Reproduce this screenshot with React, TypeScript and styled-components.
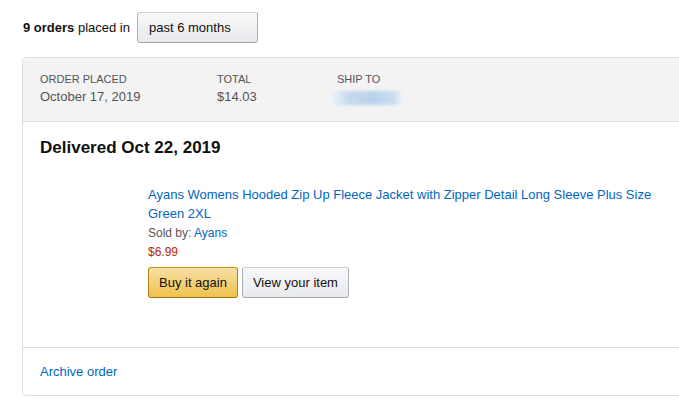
import React from 'react';
import styled, { createGlobalStyle } from 'styled-components';

const GlobalStyle = createGlobalStyle`
  html, body {
    margin: 0;
    padding: 0;
    background: #fff;
  }
  body {
    font-family: "Liberation Sans", Arial, sans-serif;
    font-size: 13px;
    color: #111;
  }
`;

const Page = styled.div`
  box-sizing: border-box;
  width: 100%;
  overflow: hidden;
  padding: 12px 0 12px 22px;
`;

const FilterRow = styled.div`
  display: flex;
  align-items: center;
  height: 31px;
  padding-left: 1px;
`;

const FilterText = styled.span`
  font-size: 13px;
  color: #111;
  margin-right: 7px;
  b {
    font-weight: bold;
  }
`;

const Dropdown = styled.button`
  width: 121px;
  height: 31px;
  padding: 0 11px;
  text-align: left;
  font-family: inherit;
  font-size: 13px;
  color: #111;
  border: 1px solid #adb1b8;
  border-color: #cdcdcd #adb1b8 #a2a6ac;
  border-radius: 3px;
  background: linear-gradient(to bottom, #f7f8fa, #e7e9ec);
  box-shadow: 0 1px 0 rgba(255, 255, 255, 0.6) inset;
`;

const Card = styled.div`
  margin-top: 14px;
  margin-right: -10px;
  border: 1px solid #ddd;
  border-radius: 4px;
  overflow: hidden;
`;

const CardHeader = styled.div`
  display: flex;
  background: #f3f3f3;
  border-bottom: 1px solid #ddd;
  padding: 14px 17px 14px;
  height: 35px;
`;

const HeaderCol = styled.div<{ $w: number }>`
  width: ${p => p.$w}px;
  display: flex;
  flex-direction: column;
`;

const Label = styled.div`
  font-size: 11px;
  line-height: 15px;
  text-transform: uppercase;
  color: #555;
`;

const Value = styled.div`
  font-size: 13px;
  line-height: 20px;
  color: #555;
`;

const Blurred = styled.div`
  margin-top: 4px;
  margin-left: -7px;
  width: 74px;
  height: 14px;
  background: linear-gradient(to right, #f1f5fa, #c6d9ee 25%, #b9d2ec 60%, #c9dcef 85%, #f2f6fa);
  filter: blur(1.5px);
`;

const ItemSection = styled.div`
  padding: 16px 17px 0;
  height: 209px;
  border-bottom: 1px solid #ddd;
`;

const Status = styled.div`
  font-size: 17px;
  font-weight: bold;
  line-height: 20px;
  color: #111;
`;

const ItemRow = styled.div`
  display: flex;
  margin-top: 27px;
`;

const Thumb = styled.div`
  width: 90px;
  height: 90px;
  margin-right: 18px;
`;

const ItemInfo = styled.div`
  width: 520px;
  display: flex;
  flex-direction: column;
`;

const Link = styled.a`
  color: #0066c0;
  text-decoration: none;
  cursor: pointer;
`;

const Title = styled(Link)`
  font-size: 13px;
  line-height: 19px;
  margin-bottom: 1px;
`;

const Small = styled.div<{ $color?: string }>`
  font-size: 12px;
  line-height: 19px;
  color: ${p => p.$color || '#555'};
`;

const Buttons = styled.div`
  display: flex;
  gap: 4px;
  margin-top: 5px;
`;

const Button = styled.button<{ $primary?: boolean }>`
  height: 31px;
  padding: 0 10px;
  font-family: inherit;
  font-size: 13px;
  color: #111;
  border: 1px solid;
  border-radius: 3px;
  border-color: ${p => (p.$primary ? '#c89411 #b0820f #99710d' : '#cdcdcd #adb1b8 #a2a6ac')};
  background: ${p =>
    p.$primary
      ? 'linear-gradient(to bottom, #f7dfa5, #f0c14b)'
      : 'linear-gradient(to bottom, #f7f8fa, #e7e9ec)'};
`;

const Footer = styled.div`
  padding: 16px 17px;
  height: 15px;
  line-height: 15px;
  font-size: 13px;
`;

export default function App() {
  return (
    <>
      <GlobalStyle />
      <Page>
        <FilterRow>
          <FilterText>
            <b>9 orders</b> placed in
          </FilterText>
          <Dropdown>past 6 months</Dropdown>
        </FilterRow>
        <Card>
          <CardHeader>
            <HeaderCol $w={177}>
              <Label>Order placed</Label>
              <Value>October 17, 2019</Value>
            </HeaderCol>
            <HeaderCol $w={120}>
              <Label>Total</Label>
              <Value>$14.03</Value>
            </HeaderCol>
            <HeaderCol $w={120}>
              <Label>Ship to</Label>
              <Blurred />
            </HeaderCol>
          </CardHeader>
          <ItemSection>
            <Status>Delivered Oct 22, 2019</Status>
            <ItemRow>
              <Thumb />
              <ItemInfo>
                <Title>
                  Ayans Womens Hooded Zip Up Fleece Jacket with Zipper Detail Long Sleeve Plus Size
                  Green 2XL
                </Title>
                <Small>
                  Sold by: <Link>Ayans</Link>
                </Small>
                <Small $color="#B12704">$6.99</Small>
                <Buttons>
                  <Button $primary>Buy it again</Button>
                  <Button>View your item</Button>
                </Buttons>
              </ItemInfo>
            </ItemRow>
          </ItemSection>
          <Footer>
            <Link>Archive order</Link>
          </Footer>
        </Card>
      </Page>
    </>
  );
}
